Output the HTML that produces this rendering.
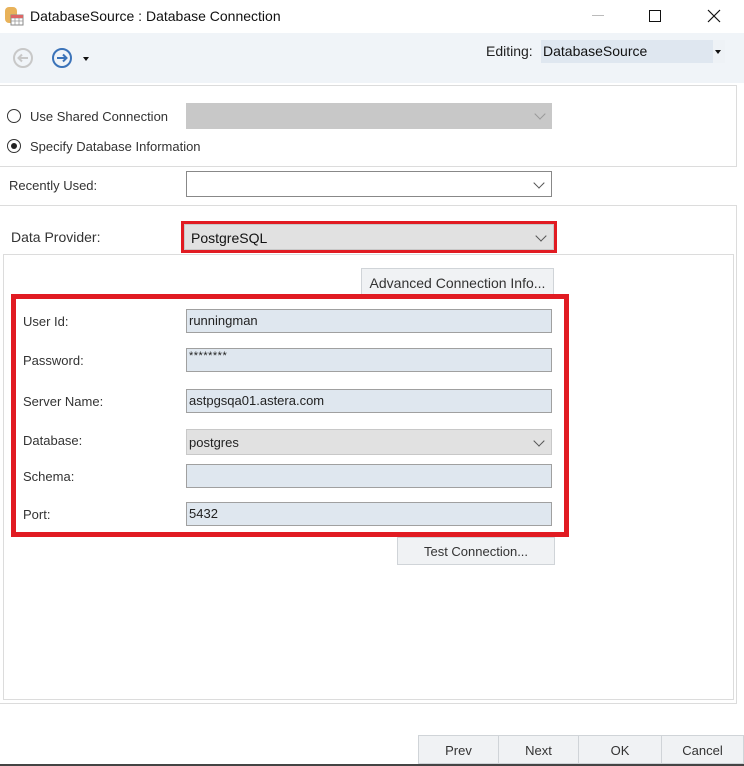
<!DOCTYPE html>
<html><head><meta charset="utf-8"><style>
*{box-sizing:border-box;margin:0;padding:0}
body{width:744px;height:766px;background:#fff;font-family:"Liberation Sans",sans-serif;font-size:13px;color:#222;position:relative;overflow:hidden}
.a{position:absolute}
.lbl{position:absolute;font-size:13px;color:#333}
.fld{position:absolute;left:186px;width:366px;height:24px;background:#dfe7ef;border:1px solid #a0a0a0;font-size:13px;padding:3px 2px;color:#222}
.chev{position:absolute;right:8px;top:7px;width:8px;height:8px;border-right:1.3px solid #555;border-bottom:1.3px solid #555;transform:rotate(45deg)}
.btn{position:absolute;background:#f0f2f4;border:1px solid #d0d4d8;text-align:center;font-size:13px;color:#333}
.radio{position:absolute;width:14px;height:14px;border:1px solid #333;border-radius:50%;background:#fff}
</style></head><body>
<svg class="a" style="left:4px;top:6px" width="20" height="20" viewBox="0 0 20 20"><rect x="1" y="1" width="12" height="16" rx="4" fill="#e8b25a"/><rect x="7" y="9" width="12" height="10" fill="#fff" stroke="#888"/><path d="M7 12h12M7 15h12M11 9v10M15 9v10" stroke="#999" stroke-width="0.8"/><rect x="7" y="9" width="12" height="3" fill="#d66"/></svg>
<div class="a" style="left:30px;top:8px;font-size:14px;color:#111">DatabaseSource : Database Connection</div>
<div class="a" style="left:592px;top:15px;width:12px;height:1px;background:#bbb"></div>
<div class="a" style="left:649px;top:10px;width:12px;height:12px;border:1px solid #111"></div>
<svg class="a" style="left:707px;top:9px" width="14" height="14"><path d="M1 1L13 13M13 1L1 13" stroke="#111" stroke-width="1.2"/></svg>
<div class="a" style="left:0;top:33px;width:744px;height:50px;background:#f0f4f8"></div>
<svg class="a" style="left:12px;top:47px" width="22" height="22"><circle cx="11" cy="11" r="9" fill="none" stroke="#c8c8c8" stroke-width="2"/><path d="M16 11H7M10 7.5L6.5 11 10 14.5" fill="none" stroke="#c8c8c8" stroke-width="2"/></svg>
<svg class="a" style="left:51px;top:47px" width="22" height="22"><circle cx="11" cy="11" r="9" fill="none" stroke="#3b73b9" stroke-width="2"/><path d="M6 11H15M12 7.5L15.5 11 12 14.5" fill="none" stroke="#3b73b9" stroke-width="2"/></svg>
<div class="a" style="left:83px;top:57px;border-left:3px solid transparent;border-right:3px solid transparent;border-top:4px solid #111"></div>
<div class="a" style="left:486px;top:43px;font-size:14px;color:#222">Editing:</div>
<div class="a" style="left:541px;top:40px;width:172px;height:23px;background:#dfe7f0;font-size:14px;padding:3px 2px;color:#111">DatabaseSource</div>
<div class="a" style="left:713px;top:40px;width:12px;height:23px;background:#eef2f6"></div>
<div class="a" style="left:715px;top:50px;border-left:3px solid transparent;border-right:3px solid transparent;border-top:4px solid #111"></div>
<div class="a" style="left:0;top:85px;width:737px;height:82px;border:1px solid #dcdcdc;border-left:none"></div>
<div class="radio" style="left:7px;top:109px"></div>
<div class="lbl" style="left:30px;top:109px;font-size:13px">Use Shared Connection</div>
<div class="a" style="left:186px;top:103px;width:366px;height:26px;background:#c8c8c8"><div class="chev" style="border-color:#999"></div></div>
<div class="radio" style="left:7px;top:139px"><div class="a" style="left:3px;top:3px;width:6px;height:6px;border-radius:50%;background:#222"></div></div>
<div class="lbl" style="left:30px;top:139px;font-size:13px">Specify Database Information</div>
<div class="lbl" style="left:9px;top:178px;font-size:13px">Recently Used:</div>
<div class="a" style="left:186px;top:171px;width:366px;height:26px;background:#fff;border:1px solid #888"><div class="chev"></div></div>
<div class="a" style="left:0;top:205px;width:737px;height:499px;border:1px solid #dcdcdc;border-left:none"></div>
<div class="lbl" style="left:11px;top:229px;font-size:14px">Data Provider:</div>
<div class="a" style="left:181px;top:221px;width:376px;height:32px;border:3px solid #e11b22"></div>
<div class="a" style="left:184px;top:224px;width:370px;height:26px;background:#e1e1e1;border:1px solid #c8c8c8;font-size:14px;padding:5px 6px;color:#111">PostgreSQL<div class="chev"></div></div>
<div class="a" style="left:3px;top:254px;width:731px;height:446px;border:1px solid #dcdcdc"></div>
<div class="btn" style="left:361px;top:268px;width:193px;height:28px;padding-top:6px;font-size:14px">Advanced Connection Info...</div>
<div class="a" style="left:11px;top:294px;width:558px;height:243px;border:5px solid #e11b22;background:#fff"></div>
<div class="lbl" style="left:23px;top:314px">User Id:</div><div class="fld" style="top:309px">runningman</div>
<div class="lbl" style="left:23px;top:353px">Password:</div><div class="fld" style="top:348px;padding-top:1px;font-size:11px;letter-spacing:0.5px">********</div>
<div class="lbl" style="left:23px;top:394px">Server Name:</div><div class="fld" style="top:389px">astpgsqa01.astera.com</div>
<div class="lbl" style="left:23px;top:433px">Database:</div><div class="fld" style="top:429px;height:26px;background:#e1e1e1;border-color:#c8c8c8;padding-top:5px">postgres<div class="chev"></div></div>
<div class="lbl" style="left:23px;top:469px">Schema:</div><div class="fld" style="top:464px"></div>
<div class="lbl" style="left:23px;top:507px">Port:</div><div class="fld" style="top:502px">5432</div>
<div class="btn" style="left:397px;top:537px;width:158px;height:28px;padding-top:6px">Test Connection...</div>
<div class="btn" style="left:418px;top:735px;width:81px;height:29px;padding-top:7px">Prev</div>
<div class="btn" style="left:498px;top:735px;width:81px;height:29px;padding-top:7px">Next</div>
<div class="btn" style="left:578px;top:735px;width:84px;height:29px;padding-top:7px">OK</div>
<div class="btn" style="left:661px;top:735px;width:83px;height:29px;padding-top:7px">Cancel</div>
<div class="a" style="left:0;top:764px;width:744px;height:2px;background:#444"></div>
</body></html>
